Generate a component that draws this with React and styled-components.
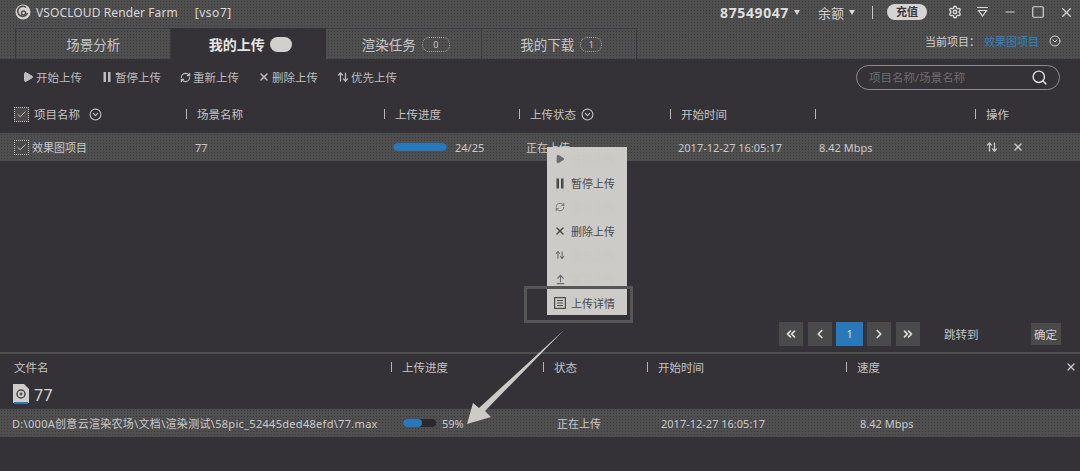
import React from "react";
import styled, { createGlobalStyle, css } from "styled-components";
import {
  ArrowUpDown,
  ArrowUpFromLine,
  ChevronsLeft,
  ChevronLeft,
  ChevronRight,
  ChevronsRight,
  CircleChevronDown,
  Check,
  Minus,
  Play,
  RefreshCw,
  Search,
  Settings,
  Square,
  X
} from "lucide-react";

const GlobalStyle = createGlobalStyle`
  html, body {
    margin: 0;
    padding: 0;
    background: #343236;
  }
  body {
    font-family: "Noto Sans", "Noto Sans CJK SC", sans-serif;
    color: #d2d2d2;
  }
  * {
    box-sizing: border-box;
  }
`;

const dither = css`
  background-color: #4f4f50;
  background-image: radial-gradient(#3a383c 0.7px, transparent 0.9px);
  background-size: 3px 3px;
`;

const Page = styled.div`
  position: relative;
  width: 1080px;
  height: 471px;
  overflow: hidden;
  display: flex;
  flex-direction: column;
  background: #343236;
`;

const TopArea = styled.div`
  ${dither}
  height: 59px;
  flex: none;
`;

const TitleBar = styled.div`
  height: 28px;
  display: flex;
  align-items: center;
  padding: 0 6px 4px 15px;
`;

const AppTitle = styled.span`
  margin-left: 5px;
  font-size: 12px;
  letter-spacing: 0.1px;
  color: #d8d8d8;
`;

const Workspace = styled.span`
  margin-left: 17px;
  font-size: 12px;
  letter-spacing: 0.5px;
  color: #d8d8d8;
`;

const Account = styled.div`
  margin-left: auto;
  display: flex;
  align-items: center;
`;

const UserId = styled.span`
  font-size: 14px;
  font-weight: 700;
  letter-spacing: 0.6px;
  color: #dedede;
`;

const Balance = styled.span`
  margin-left: 18px;
  font-size: 13px;
`;

const Caret = styled.span`
  width: 0;
  height: 0;
  margin-left: 5px;
  border-left: 3.5px solid transparent;
  border-right: 3.5px solid transparent;
  border-top: 5px solid #d8d8d8;
`;

const Divider = styled.span`
  width: 1px;
  height: 13px;
  margin: 0 14px 0 17px;
  background: #c8c8c8;
`;

const TopUp = styled.span`
  width: 40px;
  height: 16px;
  border-radius: 8px;
  background: #d6d4d2;
  color: #3a383c;
  font-size: 11px;
  font-weight: 700;
  line-height: 16px;
  text-align: center;
`;

const WindowButtons = styled.div`
  display: flex;
  align-items: center;
  gap: 14px;
  margin-left: 21px;
  color: #d8d8d8;
`;

const TabRow = styled.div`
  height: 31px;
  display: flex;
  padding-left: 15px;
`;

const Tab = styled.div`
  width: 155.5px;
  display: flex;
  align-items: center;
  justify-content: center;
  gap: ${(p) => (p.$active ? "5px" : "6px")};
  padding-left: ${(p) => (p.$first ? "1px" : "5px")};
  font-size: 13.5px;
  border: 1px solid #3b3a3d;
  border-bottom: 0;
  border-left-width: ${(p) => (p.$first ? "1px" : "0")};
  color: #c6c6c6;
  ${(p) =>
    p.$active &&
    css`
      background: #343236;
      border-color: #343236;
      color: #e6e6e6;
      font-size: 14px;
      font-weight: 700;
    `}
`;

const Badge = styled.span`
  min-width: ${(p) => p.$width}px;
  height: 15px;
  padding: 0 4px;
  border: 1px dotted #a8a8a8;
  border-radius: 7px;
  font-size: 9px;
  line-height: 13px;
  text-align: center;
  color: #c6c6c6;
`;

const FilledBadge = styled.span`
  width: 22px;
  height: 15px;
  border-radius: 8px;
  background: #d2d0ce;
`;

const ProjectPicker = styled.div`
  margin-left: auto;
  padding: 0 19px 6px 0;
  display: flex;
  align-items: center;
  gap: 4px;
  font-size: 11px;
  color: #cfcfcf;
`;

const ProjectName = styled.span`
  margin-right: 6px;
  color: #2a84c6;
`;

const Toolbar = styled.div`
  height: 36px;
  flex: none;
  display: flex;
  align-items: center;
  gap: 19px;
  padding: 0 20px 0 22px;
`;

const ToolButton = styled.div`
  display: flex;
  align-items: center;
  gap: 2px;
  font-size: 11.5px;
  color: #bdbdbd;
`;

const SearchBox = styled.div`
  margin-left: auto;
  width: 204px;
  height: 25px;
  display: flex;
  align-items: center;
  justify-content: space-between;
  padding: 0 11px 0 12px;
  border: 1px solid #8c8c8c;
  border-radius: 13px;
  font-size: 11.5px;
  color: #6f6e72;
`;

const mainColumns = "186px 198px 135px 151px 145px 160px 1fr";
const fileColumns = "391px 152px 104px 199px 1fr";

const TableHead = styled.div`
  height: 38px;
  flex: none;
  display: grid;
  grid-template-columns: ${(p) => p.$columns};
  align-items: center;
  font-size: 11.5px;
  color: #c4c4c4;
`;

const HeadCell = styled.div`
  display: flex;
  align-items: center;
  gap: 5px;
  padding-left: ${(p) => (p.$first ? "14px" : "0")};
`;

const Separator = styled.span`
  width: 1px;
  height: 10px;
  margin-right: 5px;
  background: #b5b5b5;
`;

const Box = styled.span`
  width: 15px;
  height: 15px;
  flex: none;
  display: flex;
  align-items: center;
  justify-content: center;
  border: 1px dotted #bdbdbd;
  background: #4a4a4b;
  color: #c8c8c8;
`;

const TableRow = styled.div`
  ${dither}
  height: 28px;
  flex: none;
  display: grid;
  grid-template-columns: ${(p) => p.$columns};
  align-items: center;
  font-size: 11px;
  color: #c9c9c9;
`;

const RowCell = styled.div`
  display: flex;
  align-items: center;
  gap: ${(p) => p.$gap || 3}px;
  padding-left: ${(p) => p.$pad || 0}px;
  letter-spacing: ${(p) => p.$spacing || 0}px;
  white-space: nowrap;
`;

const Track = styled.span`
  width: ${(p) => p.$width}px;
  height: ${(p) => p.$height}px;
  flex: none;
  border-radius: 4px;
  background: #29282b;
  overflow: hidden;
`;

const Fill = styled.span`
  display: block;
  height: 100%;
  background: #2879ba;
  border-radius: 4px;
`;

const Spacer = styled.div`
  flex: 1;
`;

const Pagination = styled.div`
  flex: none;
  height: 26px;
  display: flex;
  align-items: center;
  padding-left: 779px;
  margin-bottom: 5px;
`;

const PageButton = styled.span`
  width: 24px;
  height: 24px;
  margin-right: 5px;
  display: flex;
  align-items: center;
  justify-content: center;
  background: #4a4a4b;
  color: #dcdcdc;
`;

const CurrentPage = styled.span`
  width: 27px;
  height: 24px;
  margin: 0 4px 0 -1px;
  display: flex;
  align-items: center;
  justify-content: center;
  background: #2879ba;
  font-size: 10px;
  color: #e6e6e6;
`;

const JumpLabel = styled.span`
  margin-left: 19px;
  font-size: 11.5px;
  color: #c4c4c4;
`;

const Confirm = styled.span`
  width: 30px;
  height: 22px;
  margin-left: 52px;
  display: flex;
  align-items: center;
  justify-content: center;
  background: #4a4a4b;
  font-size: 11.5px;
  color: #cfcfcf;
`;

const FilePanel = styled.div`
  position: relative;
  height: 119px;
  flex: none;
  border-top: 2px solid #4f4f50;
`;

const CloseButton = styled.span`
  position: absolute;
  top: 7px;
  right: 3px;
  color: #c8c8c8;
  display: flex;
`;

const FileHead = styled(TableHead)`
  height: 26px;
`;

const FileGroup = styled.div`
  height: 29px;
  display: flex;
  align-items: center;
  gap: 5px;
  padding-left: 13px;
  font-size: 16px;
  letter-spacing: 0.4px;
  color: #d6d6d6;
`;

const Menu = styled.div`
  position: absolute;
  left: 547px;
  top: 147px;
  width: 80px;
  background: #cdcbc8;
`;

const MenuItem = styled.div`
  height: 24px;
  display: flex;
  align-items: center;
  gap: 5px;
  padding-left: 7px;
  font-size: 11px;
  color: ${(p) => (p.$disabled ? "#cbc9c6" : "#4a4a4c")};
`;

const MenuIcon = styled.span`
  width: 12px;
  display: flex;
  justify-content: center;
  color: ${(p) => (p.$disabled ? "#6a696d" : "#4a4a4c")};
`;

const Highlight = styled.div`
  position: absolute;
  left: 524px;
  top: 286px;
  width: 109px;
  height: 37px;
  border: 3px solid #565656;
  pointer-events: none;
`;

const Arrow = styled.svg`
  position: absolute;
  left: 0;
  top: 0;
  pointer-events: none;
`;

const Logo = () => (
  <svg width="16" height="16" viewBox="0 0 16 16" fill="none">
    <circle cx="8" cy="8" r="7.5" fill="#d6d4d2" />
    <path d="M11 3.5 A5 5 0 1 0 12.5 9" stroke="#4f4f50" strokeWidth="1.6" />
    <circle cx="8.5" cy="9" r="2" stroke="#4f4f50" strokeWidth="1.4" />
  </svg>
);

const FileIcon = () => (
  <svg width="16" height="21" viewBox="0 0 16 21">
    <path d="M0 0H11L16 5V19H0Z" fill="#cfcdcb" />
    <circle cx="8" cy="10" r="4" fill="none" stroke="#4a4a4c" strokeWidth="1.5" />
    <circle cx="8" cy="10" r="1.4" fill="#4a4a4c" />
    <rect x="1" y="18" width="14" height="2" fill="#2879ba" />
  </svg>
);

const Gem = () => (
  <svg width="13" height="12" viewBox="0 0 13 12" fill="none" stroke="#d8d8d8" strokeWidth="1.2">
    <path d="M1 1.5H12M2.5 4.5H10.5L6.5 10Z" />
  </svg>
);

const DetailIcon = () => (
  <svg width="12" height="12" viewBox="0 0 12 12" fill="none" stroke="currentColor" strokeWidth="1.2">
    <rect x="0.6" y="0.6" width="10.8" height="10.8" />
    <path d="M3 3.5H9M3 6H9M3 8.5H9" />
  </svg>
);

const PauseBars = ({ size = 12 }) => (
  <svg width={size} height={size} viewBox="0 0 12 12" fill="currentColor">
    <rect x="2.5" y="1" width="2.5" height="10" />
    <rect x="7" y="1" width="2.5" height="10" />
  </svg>
);

const tools = [
  { icon: <Play size={12} fill="currentColor" />, label: "开始上传" },
  { icon: <PauseBars />, label: "暂停上传" },
  { icon: <RefreshCw size={11} strokeWidth={2.5} />, label: "重新上传" },
  { icon: <X size={12} strokeWidth={3} />, label: "删除上传" },
  { icon: <ArrowUpDown size={12} strokeWidth={2.5} />, label: "优先上传" }
];

const mainHead = ["场景名称", "上传进度", "上传状态", "开始时间", "", "操作"];
const fileHead = ["上传进度", "状态", "开始时间", "速度"];

const menuItems = [
  { icon: <Play size={10} fill="currentColor" />, label: "开始上传", disabled: true },
  { icon: <PauseBars size={13} />, label: "暂停上传" },
  { icon: <RefreshCw size={10} />, label: "重新上传", disabled: true },
  { icon: <X size={12} strokeWidth={3} />, label: "删除上传" },
  { icon: <ArrowUpDown size={10} strokeWidth={2.5} />, label: "优先上传", disabled: true },
  { icon: <ArrowUpFromLine size={11} strokeWidth={2.5} />, label: "置顶上传", disabled: true },
  { icon: <DetailIcon />, label: "上传详情" }
];

const App = () => (
  <Page>
    <GlobalStyle />
    <TopArea>
      <TitleBar>
        <Logo />
        <AppTitle>VSOCLOUD Render Farm</AppTitle>
        <Workspace>[vso7]</Workspace>
        <Account>
          <UserId>87549047</UserId>
          <Caret />
          <Balance>余额</Balance>
          <Caret />
          <Divider />
          <TopUp>充值</TopUp>
          <WindowButtons>
            <Settings size={14} strokeWidth={2.4} />
            <Gem />
            <Minus size={14} />
            <Square size={14} />
            <X size={15} />
          </WindowButtons>
        </Account>
      </TitleBar>
      <TabRow>
        <Tab $first>场景分析</Tab>
        <Tab $active>
          我的上传
          <FilledBadge />
        </Tab>
        <Tab>
          渲染任务
          <Badge $width={28}>0</Badge>
        </Tab>
        <Tab>
          我的下载
          <Badge $width={22}>1</Badge>
        </Tab>
        <ProjectPicker>
          当前项目：
          <ProjectName>效果图项目</ProjectName>
          <CircleChevronDown size={12} />
        </ProjectPicker>
      </TabRow>
    </TopArea>

    <Toolbar>
      {tools.map((tool) => (
        <ToolButton key={tool.label}>
          {tool.icon}
          {tool.label}
        </ToolButton>
      ))}
      <SearchBox>
        项目名称/场景名称
        <Search size={17} color="#e0e0e0" />
      </SearchBox>
    </Toolbar>

    <TableHead $columns={mainColumns}>
      <HeadCell $first>
        <Box>
          <Check size={11} />
        </Box>
        项目名称
        <CircleChevronDown size={13} style={{ marginLeft: 4 }} />
      </HeadCell>
      {mainHead.map((title, i) => (
        <HeadCell key={i}>
          <Separator />
          {title}
          {title === "上传状态" && <CircleChevronDown size={13} />}
        </HeadCell>
      ))}
    </TableHead>

    <TableRow $columns={mainColumns}>
      <RowCell $pad={14}>
        <Box>
          <Check size={11} />
        </Box>
        效果图项目
      </RowCell>
      <RowCell $pad={9}>77</RowCell>
      <RowCell $pad={9} $gap={8}>
        <Track $width={54} $height={8}>
          <Fill style={{ width: "100%" }} />
        </Track>
        24/25
      </RowCell>
      <RowCell $pad={7}>正在上传</RowCell>
      <RowCell $pad={8}>2017-12-27 16:05:17</RowCell>
      <RowCell $pad={4}>8.42 Mbps</RowCell>
      <RowCell $pad={11} $gap={14}>
        <ArrowUpDown size={12} strokeWidth={2.5} />
        <X size={12} strokeWidth={3} />
      </RowCell>
    </TableRow>

    <Spacer />

    <Pagination>
      <PageButton>
        <ChevronsLeft size={14} strokeWidth={3} />
      </PageButton>
      <PageButton>
        <ChevronLeft size={14} strokeWidth={3} />
      </PageButton>
      <CurrentPage>1</CurrentPage>
      <PageButton>
        <ChevronRight size={14} strokeWidth={3} />
      </PageButton>
      <PageButton>
        <ChevronsRight size={14} strokeWidth={3} />
      </PageButton>
      <JumpLabel>跳转到</JumpLabel>
      <Confirm>确定</Confirm>
    </Pagination>

    <FilePanel>
      <CloseButton>
        <X size={12} strokeWidth={2.5} />
      </CloseButton>
      <FileHead $columns={fileColumns}>
        <HeadCell $first>文件名</HeadCell>
        {fileHead.map((title) => (
          <HeadCell key={title}>
            <Separator />
            {title}
          </HeadCell>
        ))}
      </FileHead>
      <FileGroup>
        <FileIcon />
        77
      </FileGroup>
      <TableRow $columns={fileColumns}>
        <RowCell $pad={12} $spacing={0.3}>D:\000A创意云渲染农场\文档\渲染测试\58pic_52445ded48efd\77.max</RowCell>
        <RowCell $pad={12} $gap={6}>
          <Track $width={33} $height={8}>
            <Fill style={{ width: "59%" }} />
          </Track>
          59%
        </RowCell>
        <RowCell $pad={14}>正在上传</RowCell>
        <RowCell $pad={14}>2017-12-27 16:05:17</RowCell>
        <RowCell $pad={14}>8.42 Mbps</RowCell>
      </TableRow>
    </FilePanel>

    <Menu>
      {menuItems.map((item) => (
        <MenuItem key={item.label} $disabled={item.disabled}>
          <MenuIcon $disabled={item.disabled}>{item.icon}</MenuIcon>
          {item.label}
        </MenuItem>
      ))}
    </Menu>
    <Highlight />
    <Arrow width="1080" height="471" viewBox="0 0 1080 471">
      <polygon points="564,330 485,411 491,417 467,424 473,403 479,408" fill="#cdcbc8" />
    </Arrow>
  </Page>
);

export default App;
